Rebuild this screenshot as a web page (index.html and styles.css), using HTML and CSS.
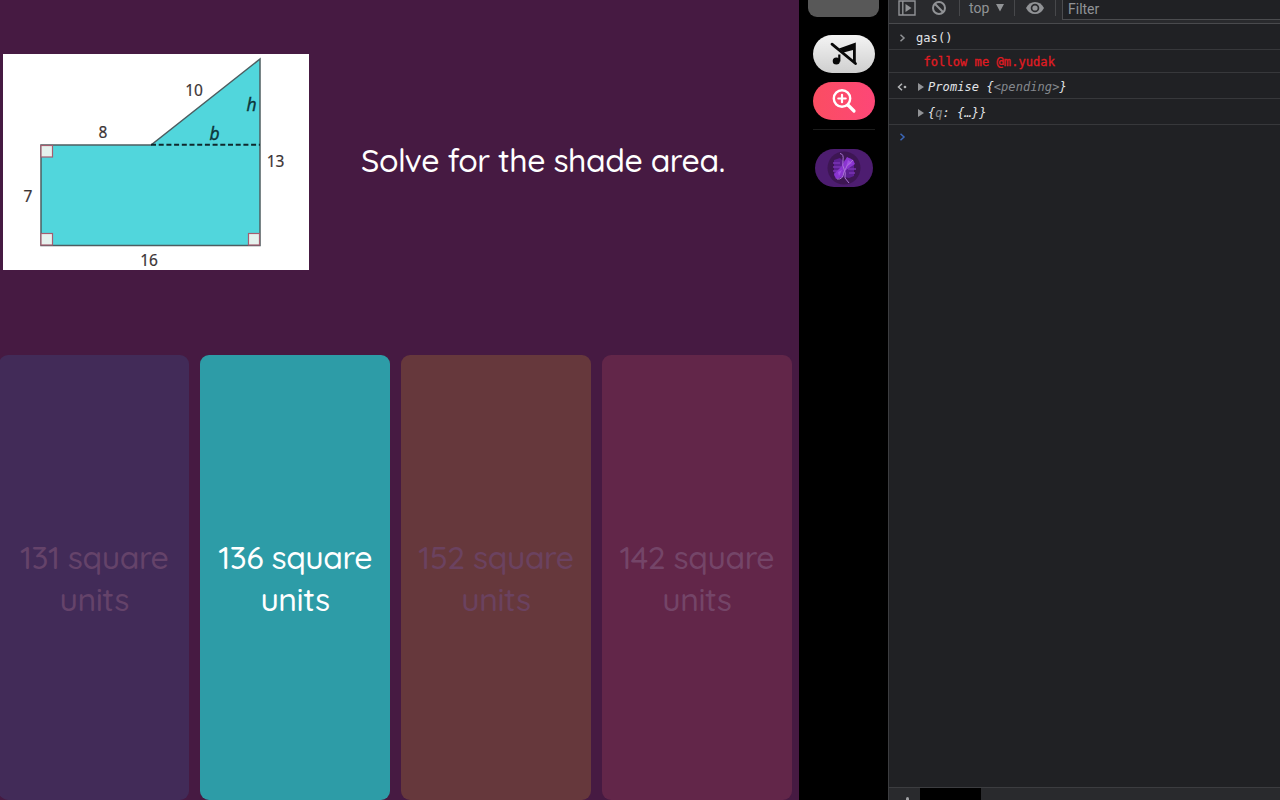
FILE: index.html
```
<!DOCTYPE html>
<html lang="en">
<head>
    <meta charset="UTF-8">
    <meta name="viewport" content="width=device-width, initial-scale=1.0">
    <title>Quiz</title>
    <link rel="stylesheet" href="styles.css">
</head>
<body>
    <main class="game">
        <section class="question">
            <svg class="figure" width="306" height="216" viewBox="3 54 306 216">
                <rect x="3" y="54" width="306" height="216" fill="#fff"/>
                <path d="M41 145H151L260 59V245.500H41Z" fill="#51d6dc" stroke="#4d5d60" stroke-width="1.500"/>
                <path d="M151 144.700H260" stroke="#10282c" stroke-width="2" stroke-dasharray="5 2.700"/>
                <g fill="#e6f2ee" stroke="#a65d70" stroke-width="1.200">
                    <rect x="41" y="145.500" width="11.500" height="11.500"/>
                    <rect x="41" y="233.500" width="11.500" height="11.500"/>
                    <rect x="248.500" y="233.500" width="11" height="11.500"/>
                </g>
                <g class="labels">
                    <text x="194" y="96">10</text>
                    <text x="103" y="138">8</text>
                    <text x="275.500" y="167">13</text>
                    <text x="28" y="202">7</text>
                    <text x="149" y="266">16</text>
                    <text class="var" x="251.500" y="111">h</text>
                    <text class="var" x="214.500" y="140">b</text>
                </g>
            </svg>
            <h1>Solve for the shade area.</h1>
        </section>
        <section class="answers">
            <button class="answer blue"><span>131 square</span><span>units</span></button>
            <button class="answer teal"><span>136 square</span><span>units</span></button>
            <button class="answer orange"><span>152 square</span><span>units</span></button>
            <button class="answer pink"><span>142 square</span><span>units</span></button>
        </section>
    </main>

    <aside class="rail">
        <div class="rail-tab"></div>
        <button class="pill mute">
            <svg width="30" height="26" viewBox="0 0 30 26">
                <path d="M10 7.500L26.800 1.500V21.500L24 19.500V9L14.500 11.500Z" fill="#080808"/>
                <circle cx="7.300" cy="20" r="3.600" fill="#080808"/>
                <path d="M10.300 20.500V13.500" stroke="#080808" stroke-width="2.200"/>
                <path d="M3 3.200L26.500 22.500" stroke="#080808" stroke-width="2.800" stroke-linecap="round"/>
            </svg>
        </button>
        <button class="pill zoom">
            <svg width="26" height="26" viewBox="0 0 26 26" fill="none" stroke="#fff" stroke-linecap="round">
                <circle cx="11" cy="10.500" r="8.200" stroke-width="2.400"/>
                <path d="M17 17L23 23" stroke-width="3.200"/>
                <path d="M11 6.800V14.200M7.300 10.500H14.700" stroke-width="2.200"/>
            </svg>
        </button>
        <hr>
        <button class="pill avatar">
            <svg width="36" height="36" viewBox="0 0 36 36">
                <circle cx="18" cy="18" r="16.500" fill="#3d1653"/>
                <path d="M8 10L14 8L17 11L24 8L28 11V26L23 28L18 27L12 29L8 26Z" fill="#5c1f92"/>
                <path d="M7 13H14M7 17H15M7 21H12M22 19H30M23 23H29" stroke="#7a35b4" stroke-width="1.500"/>
                <path d="M21 7L27 10L29 14L20 20L16 27L10 29L8 24L15 17Z" fill="#8a35d0"/>
                <path d="M22 10L26 13L20 17ZM12 22L16 20L13 26Z" fill="#a24ee4"/>
                <path d="M14 3.500Q18 4 17 10Q16 16 18 19Q20 22 19 28L23 33M11 29Q17 30 18 22Q20 15 27 10" fill="none" stroke="#a974d4" stroke-width="1"/>
            </svg>
        </button>
    </aside>

    <section class="devtools">
        <header class="toolbar">
            <svg class="icon-panel" width="18" height="16" viewBox="0 0 18 16" fill="none" stroke="#919396" stroke-width="1.400">
                <path d="M1 1H17V15H1ZM4.800 1V15"/>
                <path d="M7.500 4L13.500 8L7.500 12Z" fill="#919396" stroke="none"/>
            </svg>
            <svg class="icon-clear" width="16" height="16" viewBox="0 0 16 16" fill="none" stroke="#919396" stroke-width="2">
                <circle cx="8" cy="8" r="6"/>
                <path d="M3.800 3.800L12.200 12.200"/>
            </svg>
            <i class="sep"></i>
            <span class="context">top</span>
            <svg class="caret" width="8" height="8" viewBox="0 0 8 8"><path d="M0 0H8L4 7.500Z" fill="#919396"/></svg>
            <i class="sep mid"></i>
            <svg class="icon-eye" width="18" height="14" viewBox="0 0 18 14">
                <path d="M0 7Q3 1 9 1T18 7Q15 13 9 13T0 7Z" fill="#919396"/>
                <circle cx="9" cy="7" r="4.300" fill="#292a2d"/>
                <circle cx="9" cy="7" r="2.600" fill="#919396"/>
            </svg>
            <i class="sep last"></i>
            <div class="filter">Filter</div>
        </header>
        <div class="console">
            <div class="row input">
                <svg class="mark" width="7" height="8" viewBox="0 0 7 8"><path d="M1.500 .8L5 4L1.500 7.200"/></svg>
                <span>gas()</span>
            </div>
            <div class="row log">follow me @m.yudak</div>
            <div class="row result">
                <svg class="mark" width="10" height="8" viewBox="0 0 10 8"><path d="M5 .8L1.500 4L5 7.200"/><circle cx="8" cy="4" r=".6"/></svg>
                <i class="arrow"></i>
                <em>Promise {<b>&lt;pending&gt;</b>}</em>
            </div>
            <div class="row object">
                <i class="arrow"></i>
                <em>{<b>q</b>: {…}}</em>
            </div>
            <div class="row prompt">
                <svg class="mark" width="7" height="8" viewBox="0 0 7 8"><path d="M1.500 .8L5 4L1.500 7.200"/></svg>
            </div>
        </div>
        <footer class="drawer"><i class="dots"></i><i class="drawer-tab"></i></footer>
    </section>
</body>
</html>
```
FILE: styles.css
```
* {
    box-sizing: border-box;
}
body {
    margin: 0;
    width: 1280px;
    height: 800px;
    display: flex;
    overflow: hidden;
    background: #000;
}
button {
    border: none;
    padding: 0;
}
svg {
    display: block;
    flex: none;
}

/* quiz */
.game {
    width: 799.4px;
    background: #461a42;
    font-family: Quicksand, Lato, sans-serif;
    display: flex;
    flex-direction: column;
}
.question {
    height: 355px;
    padding: 54px 0 0 3px;
    display: flex;
    align-items: flex-start;
}
.labels {
    font-family: "Noto Sans", sans-serif;
    font-size: 15.5px;
    fill: #3b3435;
    stroke: #3b3435;
    stroke-width: 0.2px;
    text-anchor: middle;
}
.labels .var {
    font-family: "Open Sans", sans-serif;
    font-size: 17.5px;
    font-style: italic;
    font-weight: 400;
    fill: #0c3438;
    stroke: #0c3438;
    stroke-width: 0.4px;
}
.question h1 {
    margin: 86px 0 0 52px;
    font-size: 32px;
    line-height: 40px;
    font-weight: 500;
    letter-spacing: -0.45px;
    white-space: nowrap;
    color: #fff;
}
.answers {
    height: 445px;
    display: grid;
    grid-template-columns: repeat(4, 189.6px);
    gap: 11.3px;
    margin-left: -0.6px;
}
.answer {
    display: flex;
    flex-direction: column;
    align-items: center;
    justify-content: center;
    padding-top: 2px;
    border-radius: 9px;
    font-family: inherit;
    font-size: 32px;
    line-height: 41.5px;
    font-weight: 500;
    letter-spacing: -0.45px;
    white-space: nowrap;
}
.blue {
    background: #422b58;
    color: #65436a;
}
.teal {
    background: #2d9ca7;
    color: #fff;
}
.orange {
    background: #66383c;
    color: #6b4260;
}
.pink {
    background: #622649;
    color: #744568;
}

/* side buttons */
.rail {
    width: 88.6px;
    display: flex;
    flex-direction: column;
    align-items: center;
    background: #000;
}
.rail-tab {
    width: 71px;
    height: 17px;
    background: #585858;
    border-radius: 0 0 9px 9px;
}
.pill {
    width: 62px;
    height: 38px;
    border-radius: 19px;
    display: flex;
    align-items: center;
    justify-content: center;
}
.mute {
    margin-top: 18px;
    background: linear-gradient(#f4f4f4, #cfcfcf);
}
.zoom {
    margin-top: 9px;
    background: linear-gradient(90deg, #fb4d62, #fd4777);
}
.rail hr {
    width: 62px;
    margin: 9px 0 19px;
    border: none;
    border-top: 1px solid #1c1c1c;
}
.avatar {
    width: 58px;
    background: #4d1d70;
}

/* console */
.devtools {
    width: 392px;
    display: flex;
    flex-direction: column;
    background: #202124;
    border-left: 1px solid #3c3d40;
    font-family: Roboto, sans-serif;
}
.toolbar {
    height: 24px;
    display: flex;
    align-items: flex-start;
    background: #292a2d;
    border-bottom: 1px solid #494a4d;
    color: #919396;
    font-size: 14px;
    line-height: 16px;
}
.icon-panel {
    margin-left: 9px;
}
.icon-clear {
    margin-left: 15px;
}
.sep {
    width: 1px;
    height: 16px;
    margin-left: 12px;
    background: #47484b;
}
.context {
    width: 21px;
    margin-left: 9px;
}
.caret {
    margin: 4px 0 0 6px;
}
.sep.mid {
    margin-left: 10px;
}
.icon-eye {
    margin: 1px 0 0 11px;
}
.sep.last {
    margin-left: 11px;
}
.filter {
    flex: 1;
    height: 20px;
    margin-left: 6px;
    padding: 1px 0 0 5px;
    background: #202124;
    border: 1px solid #4b4c4f;
    border-width: 0 0 1px 1px;
}
.console {
    flex: 1;
    font: 12px/16px Consolas, "DejaVu Sans Mono", monospace;
    letter-spacing: 0.08px;
    color: #e3e5e8;
}
.row {
    height: 26px;
    display: flex;
    align-items: center;
    border-bottom: 1px solid #37383b;
}
.mark {
    margin-left: 10px;
    fill: none;
    stroke: #919396;
    stroke-width: 1.5;
}
.input {
    padding-top: 2px;
}
.input span {
    margin-left: 10px;
}
.log {
    height: 23px;
    padding: 2px 0 0 34.5px;
    color: #e01b22;
    -webkit-text-stroke: 0.3px #e01b22;
}
.result .mark {
    margin-left: 8px;
    stroke: #b4b6b8;
}
.arrow {
    width: 0;
    height: 0;
    border: solid transparent;
    border-width: 4px 0 4px 6px;
    border-left-color: #919396;
    margin-left: 11px;
}
.arrow + em {
    margin-left: 4px;
}
.row b {
    font-weight: 400;
    color: #85898e;
}
.result {
    padding-top: 2px;
}
.object {
    padding: 2px 0 0 18px;
}
.prompt {
    border: none;
    height: 23px;
}
.prompt .mark {
    stroke: #3c67b8;
}
.drawer {
    height: 13px;
    display: flex;
    background: #292a2d;
    border-top: 1px solid #3c3d40;
}
.dots {
    width: 3px;
    height: 3px;
    margin: 9px 12px 0 17px;
    background: #a0a1a4;
    border-radius: 2px 2px 0 0;
}
.drawer-tab {
    width: 61px;
    background: #000;
    margin-left: -1px;
}
```
